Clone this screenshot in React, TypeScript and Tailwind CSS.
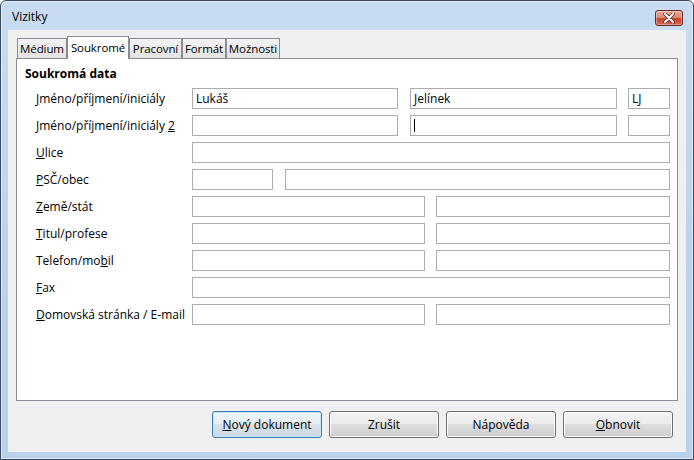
import type { ReactNode } from 'react';

const font = { fontFamily: '"Open Sans", "Noto Sans", sans-serif' };

function Field({ className, value, cursor }: { className: string; value?: string; cursor?: boolean }) {
    return (
        <div className={`flex h-[21px] shrink-0 items-center border border-[#abadb3] bg-white pl-[3px] text-[12px] leading-none text-black ${className}`}>
            {value}
            {cursor && <span className="h-[13px] w-px bg-black" />}
        </div>
    );
}

function Row({ label, children }: { label: ReactNode; children: ReactNode }) {
    return (
        <div className="flex h-[21px] items-center pl-[11px]">
            <span className="w-[156px] shrink-0 text-[12px] text-black">{label}</span>
            <div className="flex w-[478px]">{children}</div>
        </div>
    );
}

function Tab({ label, active, w }: { label: string; active?: boolean; w: string }) {
    if (active)
        return (
            <div className={`relative z-10 -mb-px flex h-[23px] items-start justify-center border border-b-0 border-[#898c95] bg-white pt-[2px] text-[11.5px] tracking-[-0.1px] ${w}`}>
                {label}
            </div>
        );
    return (
        <div className={`flex h-[20px] items-center justify-center border border-b-0 border-[#898c95] bg-gradient-to-b from-[#f3f3f3] to-[#e3e3e3] text-[11.5px] tracking-[-0.1px] ${w}`}>
            {label}
        </div>
    );
}

function Button({ children, isDefault }: { children: ReactNode; isDefault?: boolean }) {
    return (
        <button
            type="button"
            className={`relative h-[27px] w-[110px] overflow-hidden rounded-[3px] border text-[12px] text-black ${
                isDefault ? 'border-[#3c7fb1] shadow-[inset_0_0_0_1px_#c4e5f6]' : 'border-[#707070] shadow-[inset_0_0_0_1px_#fcfcfc]'
            }`}
        >
            <span
                className={`absolute inset-[1px] ${
                    isDefault
                        ? 'bg-[linear-gradient(#eef4f8_0%,#e6eef3_50%,#d8e3ea_50%,#ccd9e2_100%)]'
                        : 'bg-[linear-gradient(#f2f2f2_0%,#ebebeb_50%,#dddddd_50%,#cfcfcf_100%)]'
                }`}
            />
            <span className="relative">{children}</span>
        </button>
    );
}

export default function App() {
    return (
        <div
            style={font}
            className="flex h-[460px] w-[694px] flex-col overflow-hidden rounded-t-[6px] border border-[#3b4a5e] bg-gradient-to-b from-[#c8dcf2] via-[#bed4ee] to-[#b9d1ea] shadow-[inset_0_0_0_1px_rgba(255,255,255,0.55)]"
        >
            {/* Titulek */}
            <div className="flex h-[29px] shrink-0 items-start justify-between pl-[11px] pr-[10px]">
                <span className="pt-[7px] text-[12px] text-black">Vizitky</span>
                <div className="mt-[9px] flex h-[16px] w-[28px] items-center justify-center rounded-[3px] border border-[#6b2a22] bg-[linear-gradient(#e9a899_0%,#dd8a78_45%,#c8452f_55%,#d2664e_100%)] shadow-[inset_0_0_0_1px_rgba(255,255,255,0.35)]">
                    <svg width="12" height="10" viewBox="0 0 12 10">
                        <path d="M2 1 L10 9 M10 1 L2 9" stroke="#5a1d14" strokeWidth="3.4" strokeLinecap="round" />
                        <path d="M2 1 L10 9 M10 1 L2 9" stroke="#fff" strokeWidth="2" strokeLinecap="round" />
                    </svg>
                </div>
            </div>

            {/* Obsah */}
            <div className="mx-[7px] flex h-[422px] shrink-0 flex-col bg-[#f0f0f0]">
                <div className="box-content flex h-[22px] items-end pl-[9px] pt-[6px]">
                    <Tab label="Médium" w="w-[50px]" />
                    <Tab label="Soukromé" w="w-[62px]" active />
                    <Tab label="Pracovní" w="w-[53px]" />
                    <Tab label="Formát" w="w-[44px]" />
                    <Tab label="Možnosti" w="w-[54px]" />
                </div>

                <div className="ml-[8px] flex h-[343px] w-[662px] flex-col border border-[#898c95] bg-white pl-[8px] pt-[7px]">
                    <div className="text-[12px] font-bold leading-[16px] text-black">Soukromá data</div>
                    <div className="mt-[6px] flex flex-col gap-[6px]">
                        <Row label={<><u>J</u>méno/příjmení/iniciály</>}>
                            <Field className="w-[206px]" value="Lukáš" />
                            <Field className="ml-[12px] w-[207px]" value="Jelínek" />
                            <Field className="ml-[11px] w-[42px]" value="LJ" />
                        </Row>
                        <Row label={<>Jméno/příjmení/iniciály <u>2</u></>}>
                            <Field className="w-[206px]" />
                            <Field className="ml-[12px] w-[207px]" cursor />
                            <Field className="ml-[11px] w-[42px]" />
                        </Row>
                        <Row label={<><u>U</u>lice</>}>
                            <Field className="w-[478px]" />
                        </Row>
                        <Row label={<><u>P</u>SČ/obec</>}>
                            <Field className="w-[81px]" />
                            <Field className="ml-[12px] w-[385px]" />
                        </Row>
                        <Row label={<><u>Z</u>emě/stát</>}>
                            <Field className="w-[233px]" />
                            <Field className="ml-[11px] w-[234px]" />
                        </Row>
                        <Row label={<><u>T</u>itul/profese</>}>
                            <Field className="w-[233px]" />
                            <Field className="ml-[11px] w-[234px]" />
                        </Row>
                        <Row label={<>Telefon/mo<u>b</u>il</>}>
                            <Field className="w-[233px]" />
                            <Field className="ml-[11px] w-[234px]" />
                        </Row>
                        <Row label={<><u>F</u>ax</>}>
                            <Field className="w-[478px]" />
                        </Row>
                        <Row label={<><u>D</u>omovská stránka / E-mail</>}>
                            <Field className="w-[233px]" />
                            <Field className="ml-[11px] w-[234px]" />
                        </Row>
                    </div>
                </div>

                <div className="mt-[10px] flex justify-end gap-[7px] pr-[13px]">
                    <Button isDefault><u>N</u>ový dokument</Button>
                    <Button>Zrušit</Button>
                    <Button>Nápověda</Button>
                    <Button><u>O</u>bnovit</Button>
                </div>
            </div>
        </div>
    );
}
